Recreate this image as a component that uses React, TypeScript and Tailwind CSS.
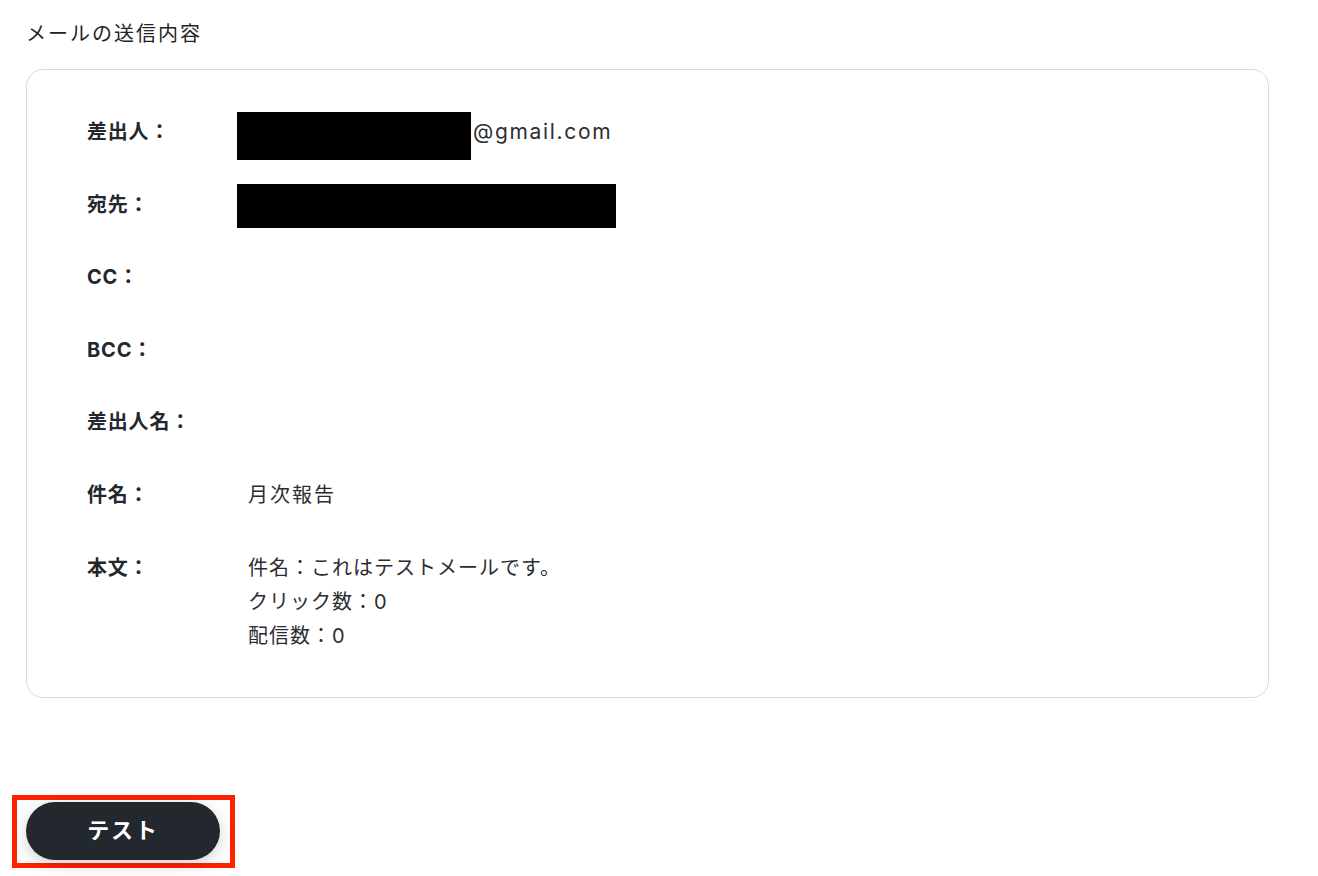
const font = { fontFamily: 'Inter, "Noto Sans CJK JP", sans-serif' };

const Row = ({ label, children }: { label: string; children?: React.ReactNode }) => (
  <div className="flex items-start">
    <div className="w-[161px] shrink-0 text-[20px] font-bold leading-[34px] tracking-[0.04em] text-[#23272e]">
      {label}
    </div>
    <div className="min-w-0 text-[20px] leading-[34px] tracking-[0.05em] text-[#2b2d31]">{children}</div>
  </div>
);

export default function App() {
  return (
    <div className="min-h-[876px] bg-white pl-[26px] pt-[19px]" style={font}>
      <h2 className="text-[20px] leading-[30px] tracking-[0.1em] text-[#222428]">メールの送信内容</h2>

      {/* Card */}
      <div className="mt-[20px] w-[1243px] rounded-[17px] border-[1.5px] border-[#d5dbe3] pb-[44px] pl-[60px] pt-[45px]">
        <div className="flex flex-col gap-[38.6px]">
          <Row label="差出人：">
            <div className="flex items-start">
              <div className="-mb-[11px] -ml-[11px] -mt-[3px] h-[48px] w-[234px] bg-black" />
              <span className="ml-[2px] text-[21px] tracking-[0.08em]">@gmail.com</span>
            </div>
          </Row>
          <Row label="宛先：">
            <div className="-mb-[6px] -ml-[11px] -mt-[4px] h-[44px] w-[379px] bg-black" />
          </Row>
          <Row label="CC：" />
          <Row label="BCC：" />
          <Row label="差出人名：" />
          <Row label="件名：">
            <span className="tracking-[0.1em]">月次報告</span>
          </Row>
          <Row label="本文：">
            <p>件名：これはテストメールです。</p>
            <p>クリック数：0</p>
            <p>配信数：0</p>
          </Row>
        </div>
      </div>

      {/* Highlighted action */}
      <div className="-ml-[14px] mt-[97px] inline-flex border-[5px] border-[#ff2200] pb-[3px] pl-[9px] pr-[10px] pt-[2px]">
        <button className="flex h-[58px] w-[194px] items-center justify-center rounded-full bg-[#23272e] text-[22px] font-bold tracking-[0.08em] text-white shadow-[0_4px_16px_rgba(0,0,0,0.18)]">
          テスト
        </button>
      </div>
    </div>
  );
}
